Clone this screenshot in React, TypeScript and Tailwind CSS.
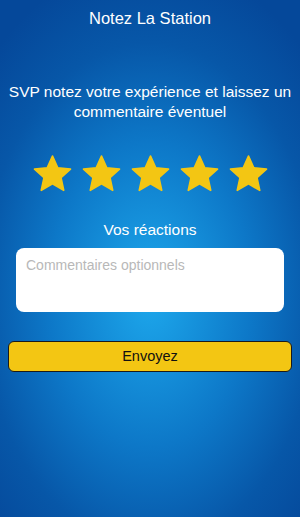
import React from "react";

function Star() {
  return (
    <svg width="41" height="39" viewBox="0 0 24 23" className="block">
      <path
        d="M12 1.2l3.1 6.9 7.5.8-5.6 5.1 1.6 7.4L12 17.6l-6.6 3.8 1.6-7.4-5.6-5.1 7.5-.8z"
        fill="#f3c613"
        stroke="#f3c613"
        strokeWidth="1"
        strokeLinejoin="round"
      />
    </svg>
  );
}

export default function App() {
  return (
    <div
      className="w-[300px] h-[517px] flex flex-col items-center text-white bg-[radial-gradient(ellipse_75%_65%_at_50%_57%,#1da8ec_0%,#0d78c8_45%,#0757a8_75%,#05489a_100%)]"
      style={{ fontFamily: '"Liberation Sans", Arial, sans-serif' }}
    >
      <h1 className="mt-[8px] text-[16.5px] leading-[20px] font-normal">Notez La Station</h1>

      <p className="mt-[54px] px-[6px] text-center text-[15.5px] leading-[20px]">
        SVP notez votre expérience et laissez un commentaire éventuel
      </p>

      <div className="mt-[32px] flex gap-[8px]">
        <Star />
        <Star />
        <Star />
        <Star />
        <Star />
      </div>

      <div className="mt-[27px] text-[15.5px] leading-[20px]">Vos réactions</div>

      <div className="mt-[8px] w-[268px] h-[64px] rounded-[8px] bg-white px-[10px] py-[8px]">
        <textarea
          placeholder="Commentaires optionnels"
          className="w-full h-full resize-none outline-none text-[14px] leading-[18px] text-gray-800 placeholder:text-[#b8b8b8] bg-transparent"
          style={{ fontFamily: '"Liberation Sans", Arial, sans-serif' }}
        />
      </div>

      <button className="mt-[29px] w-[284px] h-[31px] rounded-[6px] border border-[#1a1a1a] bg-[#f3c613] text-[14.5px] text-[#111]">
        Envoyez
      </button>
    </div>
  );
}
